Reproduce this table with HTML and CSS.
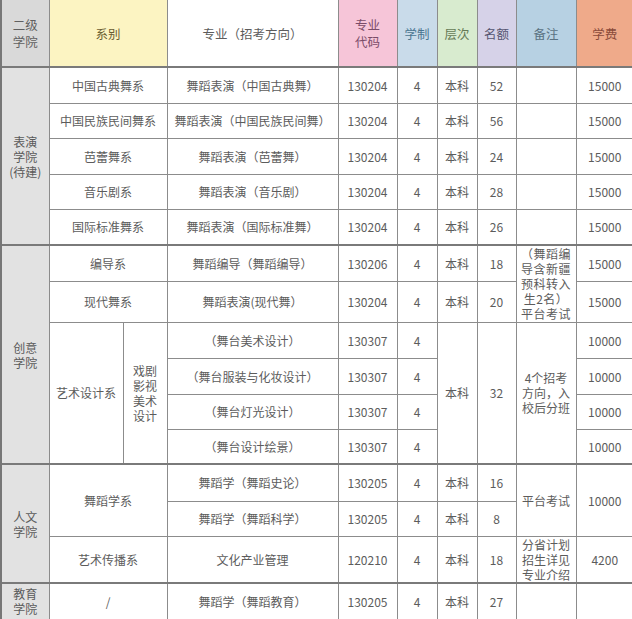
FILE: index.html
```html
<!DOCTYPE html>
<html lang="zh">
<head>
<meta charset="utf-8">
<title>招生计划</title>
<link rel="stylesheet" href="styles.css">
</head>
<body>
<table class="plan">
  <colgroup>
    <col class="c-college">
    <col class="c-dept">
    <col class="c-sub">
    <col class="c-major">
    <col class="c-code">
    <col class="c-years">
    <col class="c-level">
    <col class="c-quota">
    <col class="c-note">
    <col class="c-fee">
  </colgroup>
  <thead>
    <tr class="r-head">
      <th class="h-college">二级<br>学院</th>
      <th class="h-dept" colspan="2">系别</th>
      <th class="h-major">专业（招考方向）</th>
      <th class="h-code">专业<br>代码</th>
      <th class="h-years">学制</th>
      <th class="h-level">层次</th>
      <th class="h-quota">名额</th>
      <th class="h-note">备注</th>
      <th class="h-fee">学费</th>
    </tr>
  </thead>
  <tbody>
    <tr class="r36 g-start">
      <td class="college" rowspan="5">表演<br>学院<br>(待建)</td>
      <td colspan="2">中国古典舞系</td>
      <td>舞蹈表演（中国古典舞）</td>
      <td>130204</td><td>4</td><td>本科</td><td>52</td><td></td><td class="fee">15000</td>
    </tr>
    <tr class="r35">
      <td colspan="2">中国民族民间舞系</td>
      <td>舞蹈表演（中国民族民间舞）</td>
      <td>130204</td><td>4</td><td>本科</td><td>56</td><td></td><td class="fee">15000</td>
    </tr>
    <tr class="r36">
      <td colspan="2">芭蕾舞系</td>
      <td>舞蹈表演（芭蕾舞）</td>
      <td>130204</td><td>4</td><td>本科</td><td>24</td><td></td><td class="fee">15000</td>
    </tr>
    <tr class="r35">
      <td colspan="2">音乐剧系</td>
      <td>舞蹈表演（音乐剧）</td>
      <td>130204</td><td>4</td><td>本科</td><td>28</td><td></td><td class="fee">15000</td>
    </tr>
    <tr class="r36">
      <td colspan="2">国际标准舞系</td>
      <td>舞蹈表演（国际标准舞）</td>
      <td>130204</td><td>4</td><td>本科</td><td>26</td><td></td><td class="fee">15000</td>
    </tr>

    <tr class="r36 g-start">
      <td class="college" rowspan="6">创意<br>学院</td>
      <td colspan="2">编导系</td>
      <td>舞蹈编导（舞蹈编导）</td>
      <td>130206</td><td>4</td><td>本科</td><td>18</td>
      <td class="note note-a" rowspan="2">（舞蹈编<br>导含新疆<br>预科转入<br>生2名）<br>平台考试</td>
      <td class="fee">15000</td>
    </tr>
    <tr class="r41">
      <td colspan="2">现代舞系</td>
      <td>舞蹈表演(现代舞）</td>
      <td>130204</td><td>4</td><td>本科</td><td>20</td>
      <td class="fee">15000</td>
    </tr>
    <tr class="r36">
      <td class="dept-art" rowspan="4">艺术设计系</td>
      <td class="sub" rowspan="4">戏剧<br>影视<br>美术<br>设计</td>
      <td>（舞台美术设计）</td>
      <td>130307</td><td>4</td>
      <td rowspan="4">本科</td>
      <td rowspan="4">32</td>
      <td class="note note-b" rowspan="4">4个招考<br>方向，入<br>校后分班</td>
      <td class="fee">10000</td>
    </tr>
    <tr class="r36">
      <td>（舞台服装与化妆设计）</td>
      <td>130307</td><td>4</td>
      <td class="fee">10000</td>
    </tr>
    <tr class="r35">
      <td>（舞台灯光设计）</td>
      <td>130307</td><td>4</td>
      <td class="fee">10000</td>
    </tr>
    <tr class="r35">
      <td>（舞台设计绘景）</td>
      <td>130307</td><td>4</td>
      <td class="fee">10000</td>
    </tr>

    <tr class="r37 g-start">
      <td class="college" rowspan="3">人文<br>学院</td>
      <td colspan="2" rowspan="2">舞蹈学系</td>
      <td>舞蹈学（舞蹈史论）</td>
      <td>130205</td><td>4</td><td>本科</td><td>16</td>
      <td class="note" rowspan="2">平台考试</td>
      <td class="fee" rowspan="2">10000</td>
    </tr>
    <tr class="r35">
      <td>舞蹈学（舞蹈科学）</td>
      <td>130205</td><td>4</td><td>本科</td><td>8</td>
    </tr>
    <tr class="r47">
      <td colspan="2">艺术传播系</td>
      <td>文化产业管理</td>
      <td>120210</td><td>4</td><td>本科</td><td>18</td>
      <td class="note note-c">分省计划<br>招生详见<br>专业介绍</td>
      <td class="fee">4200</td>
    </tr>

    <tr class="r36 g-start">
      <td class="college">教育<br>学院</td>
      <td colspan="2">/</td>
      <td>舞蹈学（舞蹈教育）</td>
      <td>130205</td><td>4</td><td>本科</td><td>27</td>
      <td class="wm"></td><td class="fee wm"></td>
    </tr>
  </tbody>
</table>
</body>
</html>
```

FILE: styles.css
```css
html, body {
  margin: 0;
  padding: 0;
  background: #ffffff;
  overflow: hidden;
}

.plan {
  border-collapse: collapse;
  table-layout: fixed;
  width: 632px;
  font-family: "Noto Sans CJK SC", "Noto Sans", sans-serif;
  font-size: 12px;
  color: #5c5c5c;
}

.c-college { width: 48px; }
.c-dept { width: 74px; }
.c-sub { width: 44px; }
.c-major { width: 171px; }
.c-code { width: 59px; }
.c-years { width: 40px; }
.c-level { width: 40px; }
.c-quota { width: 39px; }
.c-note { width: 60px; }
.c-fee { width: 57px; }

.plan th,
.plan td {
  border: 1px solid #8c8c8c;
  padding: 0;
  text-align: center;
  vertical-align: middle;
  line-height: 15px;
  white-space: nowrap;
  overflow: hidden;
}

.plan th {
  font-weight: normal;
  font-size: 12.5px;
  line-height: 17px;
  border-top: none;
}

.plan th:first-child,
.plan td.college {
  border-left: 2px solid #777777;
}

.plan th:last-child,
.plan td.fee {
  border-right: none;
}

.r-head { height: 67px; }
.r35 { height: 35px; }
.r36 { height: 36px; }
.r37 { height: 37px; }
.r41 { height: 41px; }
.r47 { height: 47px; }

.g-start td {
  border-top: 2px solid #7a7a7a;
}

.h-college { background: #d9d9d9; color: #606060; }
.h-dept { background: #fcf4c2; color: #6a5c30; }
.h-major { background: #ffffff; color: #5c5c5c; }
.h-code { background: #f6c5d8; color: #7a4c68; }
.h-years { background: #c9dbea; color: #4a7590; }
.h-level { background: #d8ebcf; color: #657a56; }
.h-quota { background: #d6d2e8; color: #555570; }
.h-note { background: #b7d1e3; color: #5a7282; }
.h-fee { background: #efaa8a; color: #8a4a3a; }

.plan td.college {
  background: #e2e2e2;
  line-height: 15px;
  color: #5a5a5a;
}

.dept-art { padding-left: 4px; }

.sub { line-height: 15px; }

.note { font-size: 12px; }
.note-a { line-height: 15px; letter-spacing: 0.5px; }
.note-b { line-height: 17px; }
.note-c { line-height: 14px; }

.wm { background: #ffffff; }
```
